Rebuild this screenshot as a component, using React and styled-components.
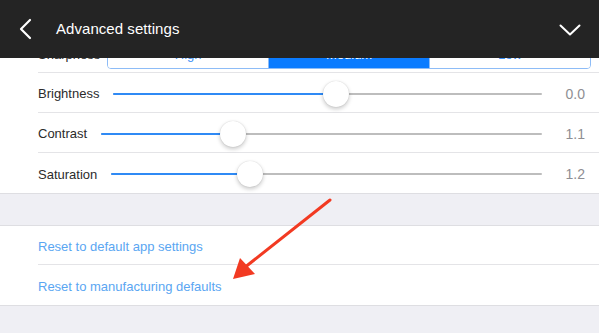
import React from "react";
import styled, { createGlobalStyle } from "styled-components";

const GlobalStyle = createGlobalStyle`
  html, body {
    margin: 0;
    padding: 0;
    background: #efeff4;
  }
  body {
    font-family: "Liberation Sans", Arial, Helvetica, sans-serif;
    -webkit-font-smoothing: antialiased;
  }
`;

const sliders = [
  { label: "Brightness", value: "0.0", pct: 52 },
  { label: "Contrast", value: "1.1", pct: 30 },
  { label: "Saturation", value: "1.2", pct: 32.3 },
];

const segments = ["High", "Medium", "Low"];

const App = () => {
  return (
    <>
      <GlobalStyle />
      <Screen>
        <Header>
          <IconButton aria-label="Back">
            <svg width="14" height="22" viewBox="0 0 14 22">
              <path d="M11 2 L2 11 L11 20" fill="none" stroke="#fff" strokeWidth="2.2" strokeLinecap="round" strokeLinejoin="round" />
            </svg>
          </IconButton>
          <Title>Advanced settings</Title>
          <IconButton aria-label="Collapse" $right>
            <svg width="22" height="12" viewBox="0 0 22 12">
              <path d="M1.5 1.5 L11 10.5 L20.5 1.5" fill="none" stroke="#fff" strokeWidth="2" strokeLinecap="round" strokeLinejoin="round" />
            </svg>
          </IconButton>
        </Header>

        <Scroll>
          <Content>
            <Group>
              <Row>
                <Label>Sharpness</Label>
                <Segmented>
                  {segments.map((s) => (
                    <Segment key={s} $active={s === "Medium"}>
                      {s}
                    </Segment>
                  ))}
                </Segmented>
              </Row>
              {sliders.map((s, i) => (
                <Row key={s.label} $last={i === sliders.length - 1}>
                  <Label>{s.label}</Label>
                  <Track>
                    <Fill style={{ width: `${s.pct}%` }} />
                    <Thumb style={{ left: `${s.pct}%` }} />
                  </Track>
                  <Value>{s.value}</Value>
                </Row>
              ))}
            </Group>

            <Gap />

            <Group>
              <Row>
                <LinkText>Reset to default app settings</LinkText>
              </Row>
              <Row $last>
                <LinkText>Reset to manufacturing defaults</LinkText>
              </Row>
            </Group>
          </Content>
        </Scroll>

        <Annotation width="599" height="333" viewBox="0 0 599 333">
          <line x1="330" y1="200" x2="244" y2="268" stroke="#f23a22" strokeWidth="3" strokeLinecap="round" />
          <polygon points="233,279 240,258 255,274" fill="#f23a22" />
        </Annotation>
      </Screen>
    </>
  );
};

const Screen = styled.div`
  position: relative;
  width: 599px;
  height: 333px;
  overflow: hidden;
  background: #efeff4;
  display: flex;
  flex-direction: column;
`;

const Header = styled.header`
  position: relative;
  z-index: 2;
  flex: 0 0 58px;
  height: 58px;
  background: #242424;
  display: flex;
  align-items: center;
  padding: 0 18px 0 19px;
  box-sizing: border-box;
`;

const IconButton = styled.div`
  display: flex;
  align-items: center;
  justify-content: center;
  margin-top: ${(p) => (p.$right ? "1px" : "0")};
`;

const Title = styled.h1`
  flex: 1;
  margin: 0 0 2px 23px;
  font-size: 15px;
  font-weight: normal;
  color: #fff;
  letter-spacing: 0.05px;
`;

const Scroll = styled.div`
  flex: 1;
  overflow: hidden;
`;

const Content = styled.div`
  margin-top: -25px;
`;

const Group = styled.section`
  background: #fff;
  border-top: 1px solid #dedee2;
  border-bottom: 1px solid #dedee2;
`;

const Row = styled.div`
  height: 40px;
  margin-left: 38px;
  padding: 2px 14px 0 0;
  box-sizing: border-box;
  display: flex;
  align-items: center;
  border-bottom: ${(p) => (p.$last ? "none" : "1px solid #e4e4e7")};
  &:first-child {
    height: 39px;
  }
`;

const Label = styled.span`
  font-size: 13px;
  color: #2b2b2b;
  white-space: nowrap;
`;

const Segmented = styled.div`
  flex: 1;
  display: flex;
  height: 29px;
  margin: 0 -6px 0 7px;
  border: 1px solid #8dbcf7;
  border-radius: 4px;
  overflow: hidden;
  box-sizing: border-box;
`;

const Segment = styled.div`
  flex: 1;
  display: flex;
  align-items: center;
  justify-content: center;
  font-size: 13px;
  color: ${(p) => (p.$active ? "#fff" : "#3b8ef5")};
  background: ${(p) => (p.$active ? "#0a7bff" : "#fff")};
  & + & {
    border-left: 1px solid #8dbcf7;
  }
`;

const Track = styled.div`
  position: relative;
  flex: 1;
  height: 2px;
  margin: 0 24px 0 14px;
  background: #bdbdbd;
  border-radius: 1px;
`;

const Fill = styled.div`
  height: 100%;
  background: #2f8af5;
  border-radius: 1px;
`;

const Thumb = styled.div`
  position: absolute;
  top: 50%;
  width: 26px;
  height: 26px;
  border-radius: 50%;
  background: #fff;
  transform: translate(-50%, -50%);
  box-shadow: 0 2px 4px rgba(0, 0, 0, 0.22), 0 0 1px rgba(0, 0, 0, 0.2);
`;

const Value = styled.span`
  font-size: 14px;
  color: #8e8e93;
`;

const Gap = styled.div`
  height: 31px;
`;

const LinkText = styled.span`
  font-size: 13px;
  color: #5aa6f2;
`;

const Annotation = styled.svg`
  position: absolute;
  left: 0;
  top: 0;
  z-index: 3;
  pointer-events: none;
`;

export default App;
